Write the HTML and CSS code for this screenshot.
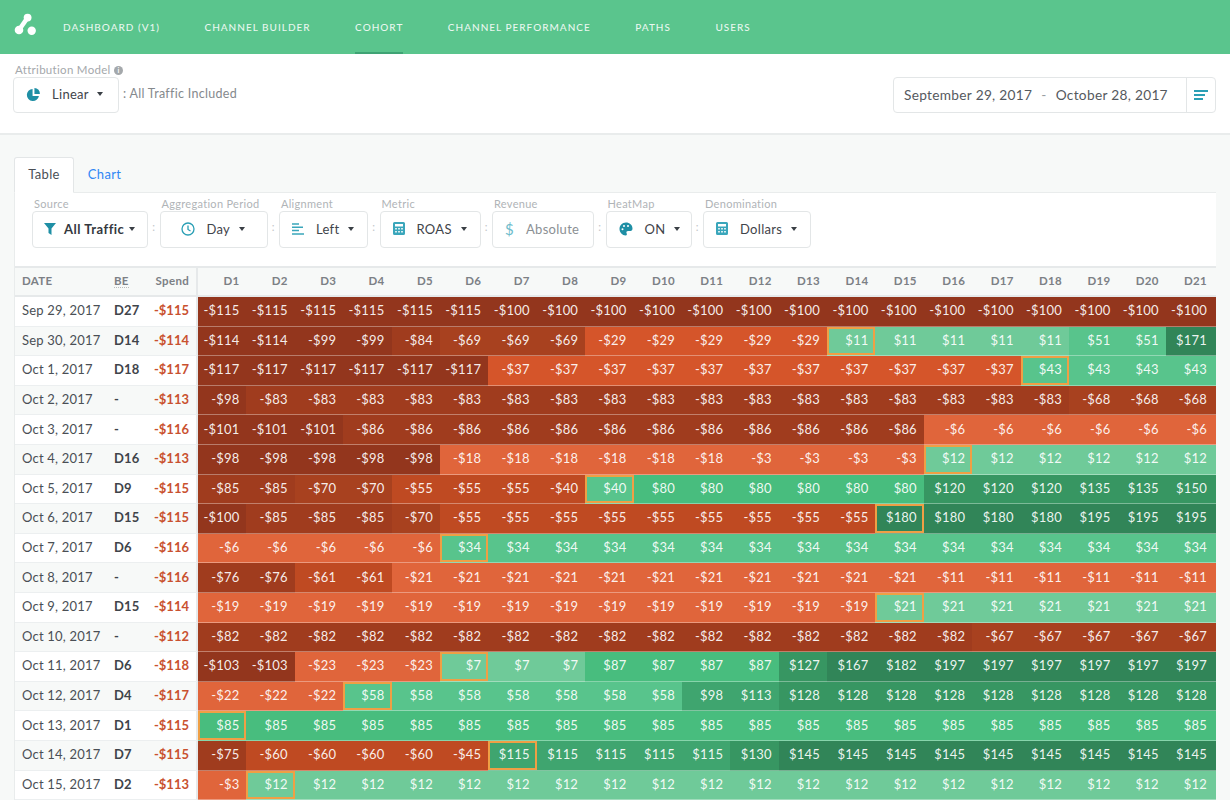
FILE: index.html
```html
<!DOCTYPE html>
<html lang="en">
<head>
  <meta charset="UTF-8">
  <meta name="viewport" content="width=device-width, initial-scale=1.0">
  <title>Cohort</title>
  <link rel="stylesheet" href="styles.css">
</head>
<body>
  <header class="topnav">
    <svg class="logo" width="24" height="24" viewBox="0 0 24 24"><path d="M13.600 4.600 L5 17" stroke="#fff" stroke-width="4.500"/><circle cx="13.600" cy="4.600" r="3.900" fill="#fff"/><circle cx="5" cy="17" r="4.300" fill="#fff"/><circle cx="17.700" cy="17.700" r="4.200" fill="#fff"/></svg>
    <nav class="nav-links">
      <a>DASHBOARD (V1)</a>
      <a>CHANNEL BUILDER</a>
      <a class="active">COHORT</a>
      <a>CHANNEL PERFORMANCE</a>
      <a>PATHS</a>
      <a>USERS</a>
    </nav>
  </header>

  <section class="model-bar">
    <div class="model-left">
      <div class="field-label">Attribution Model <span class="info">i</span></div>
      <div class="model-row">
        <div class="select model-select">
          <svg class="icon" width="15" height="15" viewBox="0 0 16 16"><path d="M7 2a6.500 6.500 0 1 0 6.800 7.600H7z" fill="#1f8fa5"/><path d="M9 1a6 6 0 0 1 5.800 6.500H9z" fill="#1f8fa5"/></svg>
          <span>Linear</span><i class="caret"></i>
        </div>
        <span class="traffic-note">: All Traffic Included</span>
      </div>
    </div>
    <div class="date-range">
      <div class="dates"><span>September 29, 2017</span><span class="dash">-</span><span>October 28, 2017</span></div>
      <div class="date-btn">
        <svg width="14" height="10" viewBox="0 0 14 10"><path d="M0 1h14M0 5h11M0 9h9" stroke="#2a9fb5" stroke-width="2"/></svg>
      </div>
    </div>
  </section>

  <main class="content">
    <div class="tabs">
      <a class="tab active">Table</a>
      <a class="tab">Chart</a>
    </div>
    <div class="panel">
      <div class="filters">
        <div class="filter">
          <label class="filter-label">Source</label>
          <div class="select w-source">
            <svg class="icon" width="12" height="12" viewBox="0 0 12 12"><path d="M0 0h12L7.500 5.500V12L4.500 10V5.500z" fill="#1f8fa5"/></svg>
            <b>All Traffic</b><i class="caret tight"></i>
          </div>
        </div>
        <span class="sep">:</span>
        <div class="filter">
          <label class="filter-label">Aggregation Period</label>
          <div class="select w-period">
            <svg class="icon" width="14" height="14" viewBox="0 0 14 14"><circle cx="7" cy="7" r="6" fill="none" stroke="#2a9fb5" stroke-width="1.300"/><path d="M7 3.500V7.500L9.500 9" fill="none" stroke="#2a9fb5" stroke-width="1.300"/></svg>
            <span>Day</span><i class="caret"></i>
          </div>
        </div>
        <span class="sep">:</span>
        <div class="filter">
          <label class="filter-label">Alignment</label>
          <div class="select w-align">
            <svg class="icon" width="12" height="12" viewBox="0 0 12 12"><path d="M0 1h7M0 4.300h11M0 7.600h7M0 11h12" stroke="#3aa6bb" stroke-width="1.500"/></svg>
            <span>Left</span><i class="caret"></i>
          </div>
        </div>
        <span class="sep">:</span>
        <div class="filter">
          <label class="filter-label">Metric</label>
          <div class="select w-metric">
            <svg class="icon" width="12" height="13" viewBox="0 0 12 13"><path fill-rule="evenodd" d="M1.500 0h9A1.500 1.500 0 0 1 12 1.500v10a1.500 1.500 0 0 1-1.500 1.500h-9A1.500 1.500 0 0 1 0 11.500v-10A1.500 1.500 0 0 1 1.500 0zM2 2v2.500h8V2zM2.200 6v1.400h1.600V6zM5.200 6v1.400h1.600V6zM8.200 6v1.400h1.600V6zM2.200 9v1.400h1.600V9zM5.200 9v1.400h1.600V9zM8.200 9v1.400h1.600V9z" fill="#3aa6bb"/></svg>
            <span>ROAS</span><i class="caret"></i>
          </div>
        </div>
        <span class="sep">:</span>
        <div class="filter">
          <label class="filter-label">Revenue</label>
          <div class="select w-revenue disabled">
            <span class="dollar">$</span>
            <span>Absolute</span>
          </div>
        </div>
        <span class="sep">:</span>
        <div class="filter">
          <label class="filter-label">HeatMap</label>
          <div class="select w-heat">
            <svg class="icon" width="14" height="14" viewBox="0 0 14 14"><path fill-rule="evenodd" d="M7 .5C3 .5 .5 3.500 .5 7s3 6.500 6 6.500c1.800 0 1.500-1.500 1-2.500-.5-1.200.5-2 1.500-2h2.500c1.300 0 2-1 2-2.500C13.500 3 10.500 .5 7 .5zM3.500 6.200a1 1 0 1 1 0 2 1 1 0 0 1 0-2zM5 3a1 1 0 1 1 0 2 1 1 0 0 1 0-2zM9 3a1 1 0 1 1 0 2 1 1 0 0 1 0-2z" fill="#1f8fa5"/></svg>
            <span>ON</span><i class="caret"></i>
          </div>
        </div>
        <span class="sep">:</span>
        <div class="filter">
          <label class="filter-label">Denomination</label>
          <div class="select w-denom">
            <svg class="icon" width="12" height="13" viewBox="0 0 12 13"><path fill-rule="evenodd" d="M1.500 0h9A1.500 1.500 0 0 1 12 1.500v10a1.500 1.500 0 0 1-1.500 1.500h-9A1.500 1.500 0 0 1 0 11.500v-10A1.500 1.500 0 0 1 1.500 0zM2 2v2.500h8V2zM2.200 6v1.400h1.600V6zM5.200 6v1.400h1.600V6zM8.200 6v1.400h1.600V6zM2.200 9v1.400h1.600V9zM5.200 9v1.400h1.600V9zM8.200 9v1.400h1.600V9z" fill="#3aa6bb"/></svg>
            <span>Dollars</span><i class="caret"></i>
          </div>
        </div>
      </div>

      <table class="cohort">
        <thead>
          <tr><th class="date">DATE</th><th class="be-col"><span class="dotted">BE</span></th><th class="spend">Spend</th><th>D1</th><th>D2</th><th>D3</th><th>D4</th><th>D5</th><th>D6</th><th>D7</th><th>D8</th><th>D9</th><th>D10</th><th>D11</th><th>D12</th><th>D13</th><th>D14</th><th>D15</th><th>D16</th><th>D17</th><th>D18</th><th>D19</th><th>D20</th><th>D21</th></tr>
        </thead>
        <tbody>
          <tr><td class="date">Sep 29, 2017</td><td class="be-col">D27</td><td class="spend">-$115</td><td class="r1">-$115</td><td class="r1">-$115</td><td class="r1">-$115</td><td class="r1">-$115</td><td class="r1">-$115</td><td class="r1">-$115</td><td class="r1">-$100</td><td class="r1">-$100</td><td class="r1">-$100</td><td class="r1">-$100</td><td class="r1">-$100</td><td class="r1">-$100</td><td class="r1">-$100</td><td class="r1">-$100</td><td class="r1">-$100</td><td class="r1">-$100</td><td class="r1">-$100</td><td class="r1">-$100</td><td class="r1">-$100</td><td class="r1">-$100</td><td class="r1">-$100</td></tr>
          <tr><td class="date">Sep 30, 2017</td><td class="be-col">D14</td><td class="spend">-$114</td><td class="r1">-$114</td><td class="r1">-$114</td><td class="r1">-$99</td><td class="r1">-$99</td><td class="r2">-$84</td><td class="r3">-$69</td><td class="r3">-$69</td><td class="r3">-$69</td><td class="r5">-$29</td><td class="r5">-$29</td><td class="r5">-$29</td><td class="r5">-$29</td><td class="r5">-$29</td><td class="g1 mark">$11</td><td class="g1">$11</td><td class="g1">$11</td><td class="g1">$11</td><td class="g1">$11</td><td class="g2">$51</td><td class="g2">$51</td><td class="g6">$171</td></tr>
          <tr><td class="date">Oct 1, 2017</td><td class="be-col">D18</td><td class="spend">-$117</td><td class="r1">-$117</td><td class="r1">-$117</td><td class="r1">-$117</td><td class="r1">-$117</td><td class="r1">-$117</td><td class="r1">-$117</td><td class="r5">-$37</td><td class="r5">-$37</td><td class="r5">-$37</td><td class="r5">-$37</td><td class="r5">-$37</td><td class="r5">-$37</td><td class="r5">-$37</td><td class="r5">-$37</td><td class="r5">-$37</td><td class="r5">-$37</td><td class="r5">-$37</td><td class="g2 mark">$43</td><td class="g2">$43</td><td class="g2">$43</td><td class="g2">$43</td></tr>
          <tr><td class="date">Oct 2, 2017</td><td class="be-col">-</td><td class="spend">-$113</td><td class="r1">-$98</td><td class="r2">-$83</td><td class="r2">-$83</td><td class="r2">-$83</td><td class="r2">-$83</td><td class="r2">-$83</td><td class="r2">-$83</td><td class="r2">-$83</td><td class="r2">-$83</td><td class="r2">-$83</td><td class="r2">-$83</td><td class="r2">-$83</td><td class="r2">-$83</td><td class="r2">-$83</td><td class="r2">-$83</td><td class="r2">-$83</td><td class="r2">-$83</td><td class="r2">-$83</td><td class="r3">-$68</td><td class="r3">-$68</td><td class="r3">-$68</td></tr>
          <tr><td class="date">Oct 3, 2017</td><td class="be-col">-</td><td class="spend">-$116</td><td class="r1">-$101</td><td class="r1">-$101</td><td class="r1">-$101</td><td class="r2">-$86</td><td class="r2">-$86</td><td class="r2">-$86</td><td class="r2">-$86</td><td class="r2">-$86</td><td class="r2">-$86</td><td class="r2">-$86</td><td class="r2">-$86</td><td class="r2">-$86</td><td class="r2">-$86</td><td class="r2">-$86</td><td class="r2">-$86</td><td class="r6">-$6</td><td class="r6">-$6</td><td class="r6">-$6</td><td class="r6">-$6</td><td class="r6">-$6</td><td class="r6">-$6</td></tr>
          <tr><td class="date">Oct 4, 2017</td><td class="be-col">D16</td><td class="spend">-$113</td><td class="r1">-$98</td><td class="r1">-$98</td><td class="r1">-$98</td><td class="r1">-$98</td><td class="r1">-$98</td><td class="r6">-$18</td><td class="r6">-$18</td><td class="r6">-$18</td><td class="r6">-$18</td><td class="r6">-$18</td><td class="r6">-$18</td><td class="r6">-$3</td><td class="r6">-$3</td><td class="r6">-$3</td><td class="r6">-$3</td><td class="g1 mark">$12</td><td class="g1">$12</td><td class="g1">$12</td><td class="g1">$12</td><td class="g1">$12</td><td class="g1">$12</td></tr>
          <tr><td class="date">Oct 5, 2017</td><td class="be-col">D9</td><td class="spend">-$115</td><td class="r2">-$85</td><td class="r2">-$85</td><td class="r3">-$70</td><td class="r3">-$70</td><td class="r4">-$55</td><td class="r4">-$55</td><td class="r4">-$55</td><td class="r4">-$40</td><td class="g2 mark">$40</td><td class="g3">$80</td><td class="g3">$80</td><td class="g3">$80</td><td class="g3">$80</td><td class="g3">$80</td><td class="g3">$80</td><td class="g5">$120</td><td class="g5">$120</td><td class="g5">$120</td><td class="g5">$135</td><td class="g5">$135</td><td class="g5">$150</td></tr>
          <tr><td class="date">Oct 6, 2017</td><td class="be-col">D15</td><td class="spend">-$115</td><td class="r1">-$100</td><td class="r2">-$85</td><td class="r2">-$85</td><td class="r2">-$85</td><td class="r3">-$70</td><td class="r4">-$55</td><td class="r4">-$55</td><td class="r4">-$55</td><td class="r4">-$55</td><td class="r4">-$55</td><td class="r4">-$55</td><td class="r4">-$55</td><td class="r4">-$55</td><td class="r4">-$55</td><td class="g6 mark">$180</td><td class="g6">$180</td><td class="g6">$180</td><td class="g6">$180</td><td class="g6">$195</td><td class="g6">$195</td><td class="g6">$195</td></tr>
          <tr><td class="date">Oct 7, 2017</td><td class="be-col">D6</td><td class="spend">-$116</td><td class="r6">-$6</td><td class="r6">-$6</td><td class="r6">-$6</td><td class="r6">-$6</td><td class="r6">-$6</td><td class="g2 mark">$34</td><td class="g2">$34</td><td class="g2">$34</td><td class="g2">$34</td><td class="g2">$34</td><td class="g2">$34</td><td class="g2">$34</td><td class="g2">$34</td><td class="g2">$34</td><td class="g2">$34</td><td class="g2">$34</td><td class="g2">$34</td><td class="g2">$34</td><td class="g2">$34</td><td class="g2">$34</td><td class="g2">$34</td></tr>
          <tr><td class="date">Oct 8, 2017</td><td class="be-col">-</td><td class="spend">-$116</td><td class="r2">-$76</td><td class="r2">-$76</td><td class="r4">-$61</td><td class="r4">-$61</td><td class="r6">-$21</td><td class="r6">-$21</td><td class="r6">-$21</td><td class="r6">-$21</td><td class="r6">-$21</td><td class="r6">-$21</td><td class="r6">-$21</td><td class="r6">-$21</td><td class="r6">-$21</td><td class="r6">-$21</td><td class="r6">-$21</td><td class="r6">-$11</td><td class="r6">-$11</td><td class="r6">-$11</td><td class="r6">-$11</td><td class="r6">-$11</td><td class="r6">-$11</td></tr>
          <tr><td class="date">Oct 9, 2017</td><td class="be-col">D15</td><td class="spend">-$114</td><td class="r6">-$19</td><td class="r6">-$19</td><td class="r6">-$19</td><td class="r6">-$19</td><td class="r6">-$19</td><td class="r6">-$19</td><td class="r6">-$19</td><td class="r6">-$19</td><td class="r6">-$19</td><td class="r6">-$19</td><td class="r6">-$19</td><td class="r6">-$19</td><td class="r6">-$19</td><td class="r6">-$19</td><td class="g1 mark">$21</td><td class="g1">$21</td><td class="g1">$21</td><td class="g1">$21</td><td class="g1">$21</td><td class="g1">$21</td><td class="g1">$21</td></tr>
          <tr><td class="date">Oct 10, 2017</td><td class="be-col">-</td><td class="spend">-$112</td><td class="r2">-$82</td><td class="r2">-$82</td><td class="r2">-$82</td><td class="r2">-$82</td><td class="r2">-$82</td><td class="r2">-$82</td><td class="r2">-$82</td><td class="r2">-$82</td><td class="r2">-$82</td><td class="r2">-$82</td><td class="r2">-$82</td><td class="r2">-$82</td><td class="r2">-$82</td><td class="r2">-$82</td><td class="r2">-$82</td><td class="r2">-$82</td><td class="r3">-$67</td><td class="r3">-$67</td><td class="r3">-$67</td><td class="r3">-$67</td><td class="r3">-$67</td></tr>
          <tr><td class="date">Oct 11, 2017</td><td class="be-col">D6</td><td class="spend">-$118</td><td class="r1">-$103</td><td class="r1">-$103</td><td class="r6">-$23</td><td class="r6">-$23</td><td class="r6">-$23</td><td class="g1 mark">$7</td><td class="g1">$7</td><td class="g1">$7</td><td class="g3">$87</td><td class="g3">$87</td><td class="g3">$87</td><td class="g3">$87</td><td class="g5">$127</td><td class="g6">$167</td><td class="g6">$182</td><td class="g6">$197</td><td class="g6">$197</td><td class="g6">$197</td><td class="g6">$197</td><td class="g6">$197</td><td class="g6">$197</td></tr>
          <tr><td class="date">Oct 12, 2017</td><td class="be-col">D4</td><td class="spend">-$117</td><td class="r6">-$22</td><td class="r6">-$22</td><td class="r6">-$22</td><td class="g2 mark">$58</td><td class="g2">$58</td><td class="g2">$58</td><td class="g2">$58</td><td class="g2">$58</td><td class="g2">$58</td><td class="g2">$58</td><td class="g4">$98</td><td class="g4">$113</td><td class="g5">$128</td><td class="g5">$128</td><td class="g5">$128</td><td class="g5">$128</td><td class="g5">$128</td><td class="g5">$128</td><td class="g5">$128</td><td class="g5">$128</td><td class="g5">$128</td></tr>
          <tr><td class="date">Oct 13, 2017</td><td class="be-col">D1</td><td class="spend">-$115</td><td class="g3 mark">$85</td><td class="g3">$85</td><td class="g3">$85</td><td class="g3">$85</td><td class="g3">$85</td><td class="g3">$85</td><td class="g3">$85</td><td class="g3">$85</td><td class="g3">$85</td><td class="g3">$85</td><td class="g3">$85</td><td class="g3">$85</td><td class="g3">$85</td><td class="g3">$85</td><td class="g3">$85</td><td class="g3">$85</td><td class="g3">$85</td><td class="g3">$85</td><td class="g3">$85</td><td class="g3">$85</td><td class="g3">$85</td></tr>
          <tr><td class="date">Oct 14, 2017</td><td class="be-col">D7</td><td class="spend">-$115</td><td class="r2">-$75</td><td class="r4">-$60</td><td class="r4">-$60</td><td class="r4">-$60</td><td class="r4">-$60</td><td class="r4">-$45</td><td class="g4 mark">$115</td><td class="g4">$115</td><td class="g4">$115</td><td class="g4">$115</td><td class="g4">$115</td><td class="g5">$130</td><td class="g6">$145</td><td class="g6">$145</td><td class="g6">$145</td><td class="g6">$145</td><td class="g6">$145</td><td class="g6">$145</td><td class="g6">$145</td><td class="g6">$145</td><td class="g6">$145</td></tr>
          <tr><td class="date">Oct 15, 2017</td><td class="be-col">D2</td><td class="spend">-$113</td><td class="r6">-$3</td><td class="g1 mark">$12</td><td class="g1">$12</td><td class="g1">$12</td><td class="g1">$12</td><td class="g1">$12</td><td class="g1">$12</td><td class="g1">$12</td><td class="g1">$12</td><td class="g1">$12</td><td class="g1">$12</td><td class="g1">$12</td><td class="g1">$12</td><td class="g1">$12</td><td class="g1">$12</td><td class="g1">$12</td><td class="g1">$12</td><td class="g1">$12</td><td class="g1">$12</td><td class="g1">$12</td><td class="g1">$12</td></tr>
        </tbody>
      </table>
    </div>
  </main>
</body>
</html>
```

FILE: styles.css
```css
* {
  box-sizing: border-box;
}

html, body {
  margin: 0;
  height: 800px;
  overflow: hidden;
}

body {
  font-family: Lato, "Open Sans", sans-serif;
  font-size: 13px;
  color: #4a4f55;
  background: #f7f9f8;
}

/* top nav */
.topnav {
  display: flex;
  height: 54px;
  background: #5ac58d;
  padding-left: 14px;
}

.logo {
  margin-top: 13px;
}

.nav-links {
  display: flex;
  margin-left: 25px;
  gap: 44.500px;
}

.nav-links a {
  display: block;
  height: 52px;
  line-height: 54px;
  font-size: 10px;
  font-weight: 500;
  letter-spacing: 1px;
  color: rgba(255, 255, 255, 0.88);
}

.nav-links a.active {
  box-shadow: 0 2px 0 #3fa374;
}

/* model bar */
.model-bar {
  display: flex;
  justify-content: space-between;
  height: 81px;
  background: #fff;
  border-bottom: 2px solid #e9ecec;
  padding: 9px 14px 0 13px;
}

.field-label {
  height: 14px;
  font-size: 11.500px;
  line-height: 13px;
  letter-spacing: 0.3px;
  color: #a4a8ab;
  padding-left: 2px;
}

.info {
  display: inline-block;
  width: 9px;
  height: 9px;
  border-radius: 50%;
  background: #a4a8ab;
  color: #fff;
  font-size: 7px;
  line-height: 9px;
  text-align: center;
  font-weight: 700;
  vertical-align: 1px;
  letter-spacing: 0;
}

.model-row {
  display: flex;
  align-items: center;
}

.select {
  display: flex;
  align-items: center;
  height: 36px;
  padding-bottom: 2px;
  background: #fff;
  border: 1px solid #e3e6e7;
  border-radius: 4px;
  font-size: 13px;
  letter-spacing: 0.3px;
  color: #3f444a;
}

.model-select {
  width: 106px;
  padding-left: 12px;
  gap: 11px;
}

.caret {
  display: inline-block;
  width: 0;
  height: 0;
  margin-left: -3px;
  border-left: 3.500px solid transparent;
  border-right: 3.500px solid transparent;
  border-top: 4px solid #3a3f45;
}

.caret.tight {
  margin-left: -3px;
}

.traffic-note {
  margin: 0 0 3px 4px;
  font-size: 12.500px;
  letter-spacing: 0.3px;
  color: #85898d;
}

.date-range {
  display: flex;
  width: 323px;
  height: 36px;
  margin-top: 14px;
  background: #fff;
  border: 1px solid #e3e6e7;
  border-radius: 4px;
}

.dates {
  display: flex;
  flex: 1;
  align-items: center;
  gap: 9px;
  padding: 0 0 2px 10px;
  font-size: 13.700px;
  letter-spacing: 0.3px;
  color: #55595e;
}

.dash {
  color: #9a9ea2;
}

.date-btn {
  display: flex;
  align-items: center;
  justify-content: center;
  width: 29px;
  border-left: 1px solid #e3e6e7;
}

/* tabs and panel */
.content {
  padding: 22px 14px 0;
}

.tabs {
  display: flex;
  height: 36px;
  margin-bottom: -1px;
}

.tab {
  position: relative;
  width: 60px;
  height: 36px;
  padding-left: 1px;
  line-height: 33px;
  text-align: center;
  font-size: 13px;
  letter-spacing: 0.3px;
  color: #2f87f5;
  border: 1px solid transparent;
}

.tab.active {
  padding-left: 0;
  line-height: 33px;
  color: #4a4f55;
  background: #fff;
  border-color: #e3e6e7;
  border-bottom-color: #fff;
  border-radius: 3px 3px 0 0;
}

.panel {
  background: #fff;
  border: 1px solid #e9ecec;
  border-width: 1px 0 0 1px;
}

.filters {
  display: flex;
  height: 73px;
  padding: 4px 0 0 17px;
}

.filter-label {
  display: block;
  height: 13px;
  margin-left: 2px;
  font-size: 11px;
  line-height: 13px;
  letter-spacing: 0.3px;
  color: #b0b4b7;
}

.filter .select {
  gap: 12px;
  height: 37px;
  margin-top: 1px;
  padding-left: 12px;
}

.sep {
  width: 11.500px;
  margin-top: 23px;
  text-align: center;
  font-size: 11px;
  color: #c2c6c8;
}

.w-source { width: 116px; }
.w-period { width: 108px; }
.w-align { width: 89px; }
.w-metric { width: 101px; }
.w-revenue { width: 102px; }
.w-heat { width: 86px; }
.w-denom { width: 108px; }

.filter .w-period {
  padding-left: 20px;
}

.filter .w-source {
  gap: 8px;
  padding-left: 11px;
}

.w-source b {
  font-weight: 700;
  letter-spacing: 0.5px;
  color: #33383e;
}

.disabled {
  color: #8b9094;
}

.dollar {
  color: #6fbccb;
  font-size: 15px;
}

/* cohort table */
.cohort {
  width: 100%;
  table-layout: fixed;
  border-collapse: separate;
  border-spacing: 0;
  font-size: 13px;
  letter-spacing: 0.2px;
}

.cohort th {
  width: 48.400px;
  height: 31px;
  padding: 0 7px 2px 0;
  text-align: right;
  font-size: 11.500px;
  font-weight: 700;
  letter-spacing: 0.3px;
  color: #7c8085;
  background: #f7f9f8;
  border-top: 2px solid #e6e9ea;
  border-bottom: 2px solid #e6e9ea;
}

.cohort th:last-child {
  width: auto;
}

.cohort th:last-child, .cohort td:last-child {
  padding-right: 9px;
}

.cohort td {
  height: 29.600px;
  padding: 0 7px 2px 0;
  text-align: right;
  color: rgba(255, 255, 255, 0.92);
  border-bottom: 1px solid rgba(255, 255, 255, 0.35);
}

.cohort tbody tr:nth-child(even) td.date,
.cohort tbody tr:nth-child(even) td.be-col,
.cohort tbody tr:nth-child(even) td.spend {
  background: #f7f9f8;
}

.cohort th.date, .cohort td.date {
  width: 99px;
  padding-left: 7px;
  text-align: left;
}

.cohort th.be-col, .cohort td.be-col {
  width: 36px;
  text-align: left;
}

.cohort th.spend, .cohort td.spend {
  width: 48px;
  padding-right: 7px;
  border-right: 2px solid #e6e9ea;
}

.cohort td.date {
  color: #4a4f55;
  background: #fff;
  border-bottom-color: #eceff0;
}

.cohort td.be-col {
  font-weight: 700;
  color: #3f444a;
  background: #fff;
  border-bottom-color: #eceff0;
}

.cohort td.spend {
  font-weight: 700;
  letter-spacing: 0;
  color: #c9512f;
  background: #fff;
  border-bottom-color: #eceff0;
}

.dotted {
  border-bottom: 1px dotted #bbb;
}

.cohort td.mark {
  box-shadow: inset 0 0 0 2px #ef9f45;
}

/* heat colours */
.r1 { background: #93361d; }
.r2 { background: #a03c1e; }
.r3 { background: #a8411f; }
.r4 { background: #bf4a22; }
.r5 { background: #d5552a; }
.r6 { background: #e0653b; }
.g1 { background: #6fca99; }
.g2 { background: #58c48c; }
.g3 { background: #48bd7e; }
.g4 { background: #3fa56f; }
.g5 { background: #379662; }
.g6 { background: #318558; }
```
